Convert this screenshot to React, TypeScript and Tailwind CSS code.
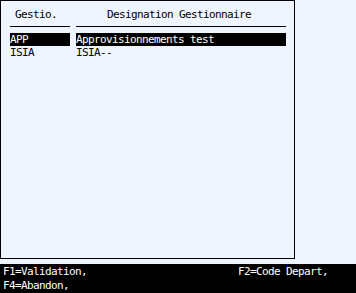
const rows = [
  { code: "APP", label: "Approvisionnements test", selected: true },
  { code: "ISIA", label: "ISIA--", selected: false },
];

const mono = "font-['DejaVu_Sans_Mono','Liberation_Mono',monospace] text-[11px] tracking-[-0.62px] leading-[13px]";

export default function App() {
  return (
    <div className={`flex h-[293px] w-[356px] flex-col overflow-hidden bg-[#eef5fe] text-black ${mono}`}>
      {/* main list panel */}
      <div className="h-[260px] w-[295px] border border-black pl-[9px] pt-[7px]">
        <div className="flex gap-[6px]">
          <div className="h-[19px] w-[60px] border-b border-black pl-[5px]">Gestio.</div>
          <div className="h-[19px] w-[210px] border-b border-black pl-[31px]">Designation Gestionnaire</div>
        </div>
        <div className="mt-[6px] flex flex-col">
          {rows.map((row) => (
            <div key={row.code} className="flex h-[13px] gap-[6px]">
              <div className={`w-[60px] whitespace-pre ${row.selected ? "bg-black text-white" : ""}`}>{row.code}</div>
              <div className={`w-[210px] whitespace-pre ${row.selected ? "bg-black text-white" : ""}`}>{row.label}</div>
            </div>
          ))}
        </div>
      </div>

      {/* function key bar */}
      <div className="mt-[5px] grid flex-1 grid-cols-[235px_1fr] bg-black pl-[3px] pt-[1px] leading-[14px] text-white">
        <span>F1=Validation,</span>
        <span>F2=Code Depart,</span>
        <span>F4=Abandon,</span>
      </div>
    </div>
  );
}
